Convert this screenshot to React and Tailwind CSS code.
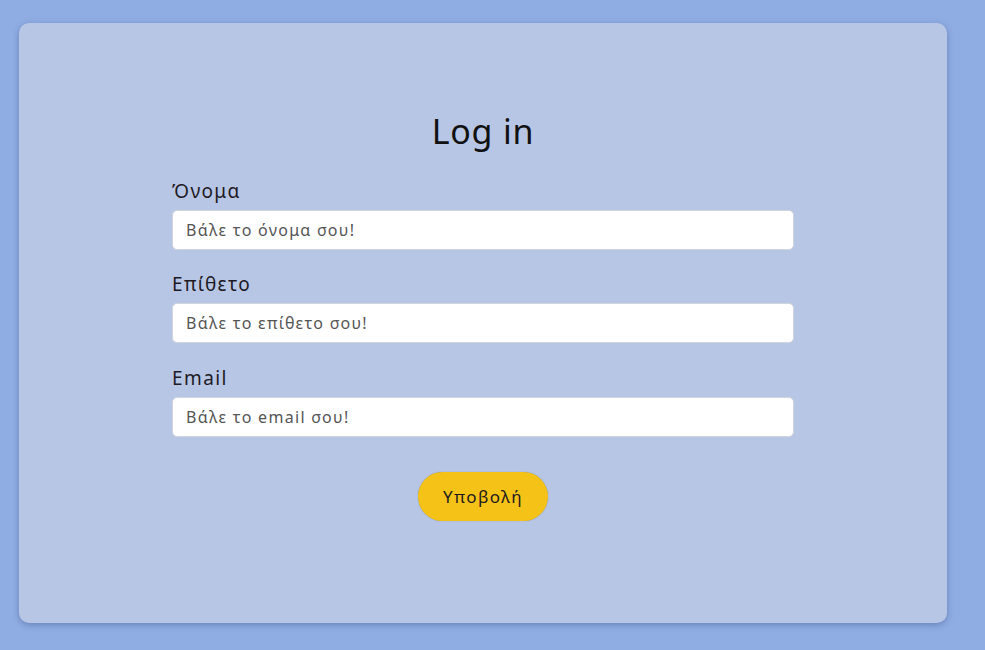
export default function App() {
  const fields = [
    { label: "Όνομα", ph: "Βάλε το όνομα σου!" },
    { label: "Επίθετο", ph: "Βάλε το επίθετο σου!" },
    { label: "Email", ph: "Βάλε το email σου!" },
  ];
  return (
    <div className="w-[985px] h-[650px] bg-[#8fade3] pt-[23px] pl-[19px] overflow-hidden" style={{ fontFamily: '"Noto Sans", "DejaVu Sans", sans-serif' }}>
      <div className="w-[928px] h-[600px] bg-[#b7c6e5] rounded-[10px] shadow-[0_2px_6px_rgba(60,80,140,0.45)] flex flex-col items-center pt-[88px]">
        <h1 className="text-[34px] leading-[40px] tracking-[0.8px] text-[#111]">Log in</h1>
        <div className="w-[622px] flex flex-col mt-[28px]">
          {fields.map((f, i) => (
            <div key={i} className={i === 1 ? "mt-[22px]" : i === 2 ? "mt-[23px]" : ""}>
              <label className="block text-[19px] leading-[24px] tracking-[1.4px] text-[#1e1a24]">{f.label}</label>
              <input
                placeholder={f.ph}
                className="mt-[7px] w-full h-[40px] bg-white border border-[#d0d4dc] rounded-[5px] px-[13px] text-[16px] tracking-[1.3px] placeholder:text-[#555] outline-none"
              />
            </div>
          ))}
        </div>
        <button className="mt-[35px] w-[130px] h-[49px] rounded-full bg-[#f5c317] text-[17px] tracking-[1.4px] text-[#1d1a20] shadow-[0_0_1px_rgba(0,0,0,0.35)]">
          Υποβολή
        </button>
      </div>
    </div>
  );
}
